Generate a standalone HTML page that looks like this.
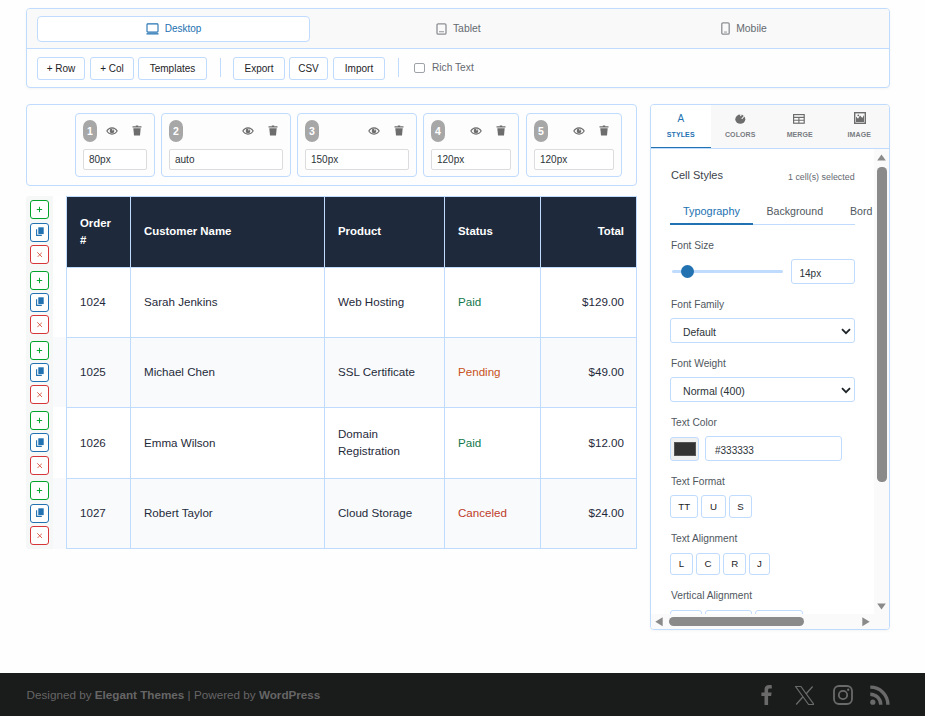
<!DOCTYPE html>
<html><head><meta charset="utf-8">
<style>
*{box-sizing:border-box;margin:0;padding:0}
html,body{width:925px;height:717px;overflow:hidden}
body{position:relative;background:#fefefe;font-family:"Liberation Sans",sans-serif;color:#1d2327}
.abs{position:absolute}
.nw{white-space:nowrap}
#tb{left:26px;top:8px;width:864px;height:80px;border:1px solid #bfdbfe;border-radius:4px;background:#fefefe;overflow:hidden;box-shadow:0 1px 3px rgba(0,0,0,.045)}
#tb .top{position:absolute;left:0;top:0;width:862px;height:40px;background:#f9f9f9;border-bottom:1px solid #bfdbfe}
.dev{position:absolute;top:7px;height:26px;width:273px;padding-bottom:1px;font-size:10px;color:#646970;display:flex;align-items:center;justify-content:center}
.dev.act{background:#fff;border:1px solid #bfdbfe;border-radius:4px;color:#2271b1}
.dev svg{margin-right:6px;display:block}
.btn{position:absolute;top:48px;height:23px;padding-bottom:1px;border:1px solid #bfdbfe;border-radius:3px;background:#fff;font-size:10px;color:#1d2327;display:flex;align-items:center;justify-content:center}
.sep{position:absolute;top:49px;width:1px;height:19px;background:#bfdbfe}
#cp{left:26px;top:104px;width:611px;height:82px;border:1px solid #bfdbfe;border-radius:4px;background:#fefefe}
.cc{position:absolute;top:8px;height:64px;border:1px solid #bfdbfe;border-radius:4px;background:#fdfdfd}
.badge{position:absolute;left:7px;top:6px;width:14px;height:22px;border-radius:7px;background:#a7a7a7;color:#fff;font-size:10.5px;font-weight:bold;display:flex;align-items:center;justify-content:center}
.cin{position:absolute;left:7px;top:35px;height:21px;border:1px solid #dcdcde;border-radius:2px;background:#fff;font-size:10px;color:#2c3338;padding-left:5px;display:flex;align-items:center}
.eye{position:absolute;top:12.5px;line-height:0}
.trash{position:absolute;top:11px;line-height:0}
.th{position:absolute;display:flex;align-items:center;padding-left:13px;padding-bottom:1px;color:#fff;font-weight:bold;font-size:11.4px;line-height:17px}
.td{position:absolute;display:flex;align-items:center;padding-left:13px;padding-bottom:1.5px;color:#1f2a3a;font-size:11.6px;line-height:17.5px}
.th.r,.td.r{justify-content:flex-end;padding-left:0;padding-right:12px}
.rb{position:absolute;left:30px;width:19px;height:19px;border:1px solid;border-radius:3px;background:#fff;display:flex;align-items:center;justify-content:center}
.rb svg{display:block}
#rp{left:650px;top:104px;width:240px;height:526px;border:1px solid #bfdbfe;border-radius:4px;background:#fff;overflow:hidden;box-shadow:0 1px 3px rgba(0,0,0,.045)}
.tab{position:absolute;top:0;height:44px;width:59.5px;background:#f8f8f8;border-bottom:1px solid #bfdbfe;text-align:center;color:#787c82}
.tab.act{background:#fff;color:#2271b1}
.tab .lbl{position:absolute;left:0;right:0;top:25.8px;font-size:7px;line-height:8px;font-weight:bold;letter-spacing:0.1px}
.inp{position:absolute;border:1px solid #bfdbfe;border-radius:3px;background:#fff;font-size:10px;color:#2c3338;display:flex;align-items:center}
.fb{position:absolute;height:22.3px;border:1px solid #bfdbfe;border-radius:3px;background:#fff;font-size:9.7px;color:#1d2327;display:flex;align-items:center;justify-content:center}
#ft{left:0;top:673px;width:925px;height:43px;background:#1a1b1b;color:#666}
</style></head><body>
<div id="tb" class="abs"><div class="top">
<div class="dev act" style="left:10px"><svg width="13" height="12" viewBox="0 0 13 12"><rect x="1" y="0.9" width="11" height="8.2" rx="0.8" fill="none" stroke="#2271b1" stroke-width="1.1"/><rect x="0.5" y="10" width="12" height="1.6" fill="#2271b1" opacity=".8"/></svg><span>Desktop</span></div>
<div class="dev" style="left:294.8px;font-size:10.4px"><svg width="11" height="12" viewBox="0 0 11 12"><rect x="1" y="0.8" width="9" height="10.4" rx="1.2" fill="none" stroke="#8c8f94" stroke-width="1.3"/><rect x="3" y="8.3" width="5" height="0.9" fill="#8c8f94"/></svg><span>Tablet</span></div>
<div class="dev" style="left:580.5px;font-size:10.4px"><svg width="9" height="13" viewBox="0 0 9 13"><rect x="0.8" y="0.8" width="7.4" height="11.4" rx="1.2" fill="none" stroke="#8c8f94" stroke-width="1.3"/><rect x="3" y="9.6" width="3" height="0.9" fill="#8c8f94"/></svg><span>Mobile</span></div>
</div>
<div class="btn" style="left:10px;width:48px">+ Row</div>
<div class="btn" style="left:63px;width:44px">+ Col</div>
<div class="btn" style="left:111px;width:69px">Templates</div>
<div class="btn" style="left:206px;width:52px">Export</div>
<div class="btn" style="left:262px;width:39px">CSV</div>
<div class="btn" style="left:306px;width:52px">Import</div>
<div class="sep" style="left:193px"></div><div class="sep" style="left:371px"></div>
<div class="abs" style="left:387px;top:53.5px;width:10.5px;height:10.5px;border:1px solid #9ea3a8;border-radius:2px;background:#fff"></div>
<div class="abs nw" style="left:405px;top:53px;font-size:10.2px;color:#646970">Rich Text</div>
</div>
<div id="cp" class="abs">
<div class="cc" style="left:48px;width:80px"><div class="badge">1</div><div class="eye" style="left:30.2px"><svg width="12" height="8" viewBox="0 0 12 8"><path d="M6 0.3C3.2 0.3 1.1 2.2 0.2 4c0.9 1.8 3 3.7 5.8 3.7S10.9 5.8 11.8 4C10.9 2.2 8.8 0.3 6 0.3z" fill="#6d6d6d"/><path d="M6 1.4C4 1.4 2.3 2.7 1.5 4 2.3 5.3 4 6.6 6 6.6S9.7 5.3 10.5 4C9.7 2.7 8 1.4 6 1.4z" fill="#fdfdfd"/><circle cx="6" cy="3.9" r="2.3" fill="#6d6d6d"/><circle cx="6.9" cy="2.8" r="0.8" fill="#fdfdfd"/></svg></div><div class="trash" style="left:55.5px"><svg width="10" height="11" viewBox="0 0 10 11"><path d="M3.8 1.2V0.6h2.4v0.6H9.5v1.4H0.5V1.2z" fill="#6d6d6d"/><path d="M1.3 3.2h7.4L8 10.6H2z" fill="#6d6d6d"/></svg></div><div class="cin" style="width:64px">80px</div></div>
<div class="cc" style="left:134px;width:130px"><div class="badge">2</div><div class="eye" style="left:80.2px"><svg width="12" height="8" viewBox="0 0 12 8"><path d="M6 0.3C3.2 0.3 1.1 2.2 0.2 4c0.9 1.8 3 3.7 5.8 3.7S10.9 5.8 11.8 4C10.9 2.2 8.8 0.3 6 0.3z" fill="#6d6d6d"/><path d="M6 1.4C4 1.4 2.3 2.7 1.5 4 2.3 5.3 4 6.6 6 6.6S9.7 5.3 10.5 4C9.7 2.7 8 1.4 6 1.4z" fill="#fdfdfd"/><circle cx="6" cy="3.9" r="2.3" fill="#6d6d6d"/><circle cx="6.9" cy="2.8" r="0.8" fill="#fdfdfd"/></svg></div><div class="trash" style="left:105.5px"><svg width="10" height="11" viewBox="0 0 10 11"><path d="M3.8 1.2V0.6h2.4v0.6H9.5v1.4H0.5V1.2z" fill="#6d6d6d"/><path d="M1.3 3.2h7.4L8 10.6H2z" fill="#6d6d6d"/></svg></div><div class="cin" style="width:114px">auto</div></div>
<div class="cc" style="left:270px;width:120px"><div class="badge">3</div><div class="eye" style="left:70.2px"><svg width="12" height="8" viewBox="0 0 12 8"><path d="M6 0.3C3.2 0.3 1.1 2.2 0.2 4c0.9 1.8 3 3.7 5.8 3.7S10.9 5.8 11.8 4C10.9 2.2 8.8 0.3 6 0.3z" fill="#6d6d6d"/><path d="M6 1.4C4 1.4 2.3 2.7 1.5 4 2.3 5.3 4 6.6 6 6.6S9.7 5.3 10.5 4C9.7 2.7 8 1.4 6 1.4z" fill="#fdfdfd"/><circle cx="6" cy="3.9" r="2.3" fill="#6d6d6d"/><circle cx="6.9" cy="2.8" r="0.8" fill="#fdfdfd"/></svg></div><div class="trash" style="left:95.5px"><svg width="10" height="11" viewBox="0 0 10 11"><path d="M3.8 1.2V0.6h2.4v0.6H9.5v1.4H0.5V1.2z" fill="#6d6d6d"/><path d="M1.3 3.2h7.4L8 10.6H2z" fill="#6d6d6d"/></svg></div><div class="cin" style="width:104px">150px</div></div>
<div class="cc" style="left:396px;width:96px"><div class="badge">4</div><div class="eye" style="left:46.2px"><svg width="12" height="8" viewBox="0 0 12 8"><path d="M6 0.3C3.2 0.3 1.1 2.2 0.2 4c0.9 1.8 3 3.7 5.8 3.7S10.9 5.8 11.8 4C10.9 2.2 8.8 0.3 6 0.3z" fill="#6d6d6d"/><path d="M6 1.4C4 1.4 2.3 2.7 1.5 4 2.3 5.3 4 6.6 6 6.6S9.7 5.3 10.5 4C9.7 2.7 8 1.4 6 1.4z" fill="#fdfdfd"/><circle cx="6" cy="3.9" r="2.3" fill="#6d6d6d"/><circle cx="6.9" cy="2.8" r="0.8" fill="#fdfdfd"/></svg></div><div class="trash" style="left:71.5px"><svg width="10" height="11" viewBox="0 0 10 11"><path d="M3.8 1.2V0.6h2.4v0.6H9.5v1.4H0.5V1.2z" fill="#6d6d6d"/><path d="M1.3 3.2h7.4L8 10.6H2z" fill="#6d6d6d"/></svg></div><div class="cin" style="width:80px">120px</div></div>
<div class="cc" style="left:499px;width:96px"><div class="badge">5</div><div class="eye" style="left:46.2px"><svg width="12" height="8" viewBox="0 0 12 8"><path d="M6 0.3C3.2 0.3 1.1 2.2 0.2 4c0.9 1.8 3 3.7 5.8 3.7S10.9 5.8 11.8 4C10.9 2.2 8.8 0.3 6 0.3z" fill="#6d6d6d"/><path d="M6 1.4C4 1.4 2.3 2.7 1.5 4 2.3 5.3 4 6.6 6 6.6S9.7 5.3 10.5 4C9.7 2.7 8 1.4 6 1.4z" fill="#fdfdfd"/><circle cx="6" cy="3.9" r="2.3" fill="#6d6d6d"/><circle cx="6.9" cy="2.8" r="0.8" fill="#fdfdfd"/></svg></div><div class="trash" style="left:71.5px"><svg width="10" height="11" viewBox="0 0 10 11"><path d="M3.8 1.2V0.6h2.4v0.6H9.5v1.4H0.5V1.2z" fill="#6d6d6d"/><path d="M1.3 3.2h7.4L8 10.6H2z" fill="#6d6d6d"/></svg></div><div class="cin" style="width:80px">120px</div></div>
</div>
<div class="abs" style="left:26px;top:196px;width:27px;height:353px;background:#f6f7f7;border-radius:3px 0 0 3px"></div>
<div class="abs" style="left:53px;top:196px;width:13px;height:72px;background:#ffffff"></div>
<div class="abs" style="left:66px;top:196px;width:571px;height:72px;background:#1e293b"></div>
<div class="abs" style="left:53px;top:267px;width:13px;height:71px;background:#ffffff"></div>
<div class="abs" style="left:66px;top:267px;width:571px;height:71px;background:#ffffff"></div>
<div class="abs" style="left:53px;top:337px;width:13px;height:71px;background:#f8fafc"></div>
<div class="abs" style="left:66px;top:337px;width:571px;height:71px;background:#f8fafc"></div>
<div class="abs" style="left:53px;top:407px;width:13px;height:72px;background:#ffffff"></div>
<div class="abs" style="left:66px;top:407px;width:571px;height:72px;background:#ffffff"></div>
<div class="abs" style="left:53px;top:478px;width:13px;height:71px;background:#f8fafc"></div>
<div class="abs" style="left:66px;top:478px;width:571px;height:71px;background:#f8fafc"></div>
<div class="abs" style="left:66px;top:196px;width:571px;height:1px;background:#bfdbfe"></div>
<div class="abs" style="left:66px;top:267px;width:571px;height:1px;background:#bfdbfe"></div>
<div class="abs" style="left:66px;top:337px;width:571px;height:1px;background:#bfdbfe"></div>
<div class="abs" style="left:66px;top:407px;width:571px;height:1px;background:#bfdbfe"></div>
<div class="abs" style="left:66px;top:478px;width:571px;height:1px;background:#bfdbfe"></div>
<div class="abs" style="left:66px;top:548px;width:571px;height:1px;background:#bfdbfe"></div>
<div class="abs" style="left:66px;top:196px;width:1px;height:353px;background:#bfdbfe"></div>
<div class="abs" style="left:130px;top:196px;width:1px;height:353px;background:#bfdbfe"></div>
<div class="abs" style="left:324px;top:196px;width:1px;height:353px;background:#bfdbfe"></div>
<div class="abs" style="left:444px;top:196px;width:1px;height:353px;background:#bfdbfe"></div>
<div class="abs" style="left:540px;top:196px;width:1px;height:353px;background:#bfdbfe"></div>
<div class="abs" style="left:636px;top:196px;width:1px;height:353px;background:#bfdbfe"></div>
<div class="th" style="left:67px;top:197px;width:63px;height:70px;">Order<br>#</div>
<div class="th" style="left:131px;top:197px;width:193px;height:70px;">Customer Name</div>
<div class="th" style="left:325px;top:197px;width:119px;height:70px;">Product</div>
<div class="th" style="left:445px;top:197px;width:95px;height:70px;">Status</div>
<div class="th r" style="left:541px;top:197px;width:95px;height:70px;">Total</div>
<div class="td" style="left:67px;top:268px;width:63px;height:69px;">1024</div>
<div class="td" style="left:131px;top:268px;width:193px;height:69px;">Sarah Jenkins</div>
<div class="td" style="left:325px;top:268px;width:119px;height:69px;">Web Hosting</div>
<div class="td" style="left:445px;top:268px;width:95px;height:69px;color:#12784c;">Paid</div>
<div class="td r" style="left:541px;top:268px;width:95px;height:69px;">$129.00</div>
<div class="td" style="left:67px;top:338px;width:63px;height:69px;">1025</div>
<div class="td" style="left:131px;top:338px;width:193px;height:69px;">Michael Chen</div>
<div class="td" style="left:325px;top:338px;width:119px;height:69px;">SSL Certificate</div>
<div class="td" style="left:445px;top:338px;width:95px;height:69px;color:#c9511a;">Pending</div>
<div class="td r" style="left:541px;top:338px;width:95px;height:69px;">$49.00</div>
<div class="td" style="left:67px;top:408px;width:63px;height:70px;">1026</div>
<div class="td" style="left:131px;top:408px;width:193px;height:70px;">Emma Wilson</div>
<div class="td" style="left:325px;top:408px;width:119px;height:70px;">Domain<br>Registration</div>
<div class="td" style="left:445px;top:408px;width:95px;height:70px;color:#12784c;">Paid</div>
<div class="td r" style="left:541px;top:408px;width:95px;height:70px;">$12.00</div>
<div class="td" style="left:67px;top:479px;width:63px;height:69px;">1027</div>
<div class="td" style="left:131px;top:479px;width:193px;height:69px;">Robert Taylor</div>
<div class="td" style="left:325px;top:479px;width:119px;height:69px;">Cloud Storage</div>
<div class="td" style="left:445px;top:479px;width:95px;height:69px;color:#c03a28;">Canceled</div>
<div class="td r" style="left:541px;top:479px;width:95px;height:69px;">$24.00</div>
<div class="rb" style="top:200.05px;border-color:#00a32a"><svg width="7" height="7" viewBox="0 0 7 7"><path d="M3.5 0.8v5.4M0.8 3.5h5.4" stroke="#00a32a" stroke-width="0.95"/></svg></div>
<div class="rb" style="top:222.50px;border-color:#2271b1"><svg width="8" height="9" viewBox="0 0 8 9" style="margin-top:-1.5px"><path d="M0.6 2.2v6.2h5.2" fill="none" stroke="#2271b1" stroke-width="1.1"/><rect x="2.3" y="0.3" width="5.4" height="6.8" fill="#2271b1"/></svg></div>
<div class="rb" style="top:244.95px;border-color:#d63638"><svg width="5.5" height="5.5" viewBox="0 0 6 6"><path d="M0.3 0.3l5.4 5.4M5.7 0.3l-5.4 5.4" stroke="#d4503a" stroke-width="0.95"/></svg></div>
<div class="rb" style="top:270.50px;border-color:#00a32a"><svg width="7" height="7" viewBox="0 0 7 7"><path d="M3.5 0.8v5.4M0.8 3.5h5.4" stroke="#00a32a" stroke-width="0.95"/></svg></div>
<div class="rb" style="top:292.95px;border-color:#2271b1"><svg width="8" height="9" viewBox="0 0 8 9" style="margin-top:-1.5px"><path d="M0.6 2.2v6.2h5.2" fill="none" stroke="#2271b1" stroke-width="1.1"/><rect x="2.3" y="0.3" width="5.4" height="6.8" fill="#2271b1"/></svg></div>
<div class="rb" style="top:315.40px;border-color:#d63638"><svg width="5.5" height="5.5" viewBox="0 0 6 6"><path d="M0.3 0.3l5.4 5.4M5.7 0.3l-5.4 5.4" stroke="#d4503a" stroke-width="0.95"/></svg></div>
<div class="rb" style="top:340.50px;border-color:#00a32a"><svg width="7" height="7" viewBox="0 0 7 7"><path d="M3.5 0.8v5.4M0.8 3.5h5.4" stroke="#00a32a" stroke-width="0.95"/></svg></div>
<div class="rb" style="top:362.95px;border-color:#2271b1"><svg width="8" height="9" viewBox="0 0 8 9" style="margin-top:-1.5px"><path d="M0.6 2.2v6.2h5.2" fill="none" stroke="#2271b1" stroke-width="1.1"/><rect x="2.3" y="0.3" width="5.4" height="6.8" fill="#2271b1"/></svg></div>
<div class="rb" style="top:385.40px;border-color:#d63638"><svg width="5.5" height="5.5" viewBox="0 0 6 6"><path d="M0.3 0.3l5.4 5.4M5.7 0.3l-5.4 5.4" stroke="#d4503a" stroke-width="0.95"/></svg></div>
<div class="rb" style="top:411.00px;border-color:#00a32a"><svg width="7" height="7" viewBox="0 0 7 7"><path d="M3.5 0.8v5.4M0.8 3.5h5.4" stroke="#00a32a" stroke-width="0.95"/></svg></div>
<div class="rb" style="top:433.45px;border-color:#2271b1"><svg width="8" height="9" viewBox="0 0 8 9" style="margin-top:-1.5px"><path d="M0.6 2.2v6.2h5.2" fill="none" stroke="#2271b1" stroke-width="1.1"/><rect x="2.3" y="0.3" width="5.4" height="6.8" fill="#2271b1"/></svg></div>
<div class="rb" style="top:455.90px;border-color:#d63638"><svg width="5.5" height="5.5" viewBox="0 0 6 6"><path d="M0.3 0.3l5.4 5.4M5.7 0.3l-5.4 5.4" stroke="#d4503a" stroke-width="0.95"/></svg></div>
<div class="rb" style="top:481.30px;border-color:#00a32a"><svg width="7" height="7" viewBox="0 0 7 7"><path d="M3.5 0.8v5.4M0.8 3.5h5.4" stroke="#00a32a" stroke-width="0.95"/></svg></div>
<div class="rb" style="top:503.75px;border-color:#2271b1"><svg width="8" height="9" viewBox="0 0 8 9" style="margin-top:-1.5px"><path d="M0.6 2.2v6.2h5.2" fill="none" stroke="#2271b1" stroke-width="1.1"/><rect x="2.3" y="0.3" width="5.4" height="6.8" fill="#2271b1"/></svg></div>
<div class="rb" style="top:526.20px;border-color:#d63638"><svg width="5.5" height="5.5" viewBox="0 0 6 6"><path d="M0.3 0.3l5.4 5.4M5.7 0.3l-5.4 5.4" stroke="#d4503a" stroke-width="0.95"/></svg></div>
<div id="rp" class="abs">
<div class="tab act" style="left:0.0px"><div style="position:absolute;left:0;right:0;top:9px;font-size:10px;line-height:10px;color:#2271b1">A</div><div class="lbl">STYLES</div></div>
<div class="tab" style="left:59.5px"><svg style="position:absolute;left:24px;top:8.5px" width="11" height="10" viewBox="0 0 11 10"><ellipse cx="5.3" cy="5.2" rx="5" ry="4.6" fill="#6d6d6d"/><path d="M4.6 0.3L5.6 2.4 7.2 0.4z" fill="#f8f8f8"/><path d="M9.2 1.6L6.3 4.6 7.1 5.3 9.7 2.3z" fill="#f8f8f8"/></svg><div class="lbl">COLORS</div></div>
<div class="tab" style="left:119.0px"><svg style="position:absolute;left:23.2px;top:9px" width="12" height="10" viewBox="0 0 12 10"><rect x="0.6" y="0.6" width="10.6" height="8.6" fill="#fff" stroke="#6d6d6d" stroke-width="1.2"/><path d="M0.6 3.4h10.6M0.6 6.2h10.6M5.9 3.4v5.8" stroke="#6d6d6d" stroke-width="1.1"/></svg><div class="lbl">MERGE</div></div>
<div class="tab" style="left:178.5px"><svg style="position:absolute;left:24px;top:7px" width="12" height="12" viewBox="0 0 12 12"><rect x="0.7" y="0.7" width="10.6" height="10.6" fill="none" stroke="#6d6d6d" stroke-width="1.4"/><path d="M2 10V4.5l2 2.2 2-3.2 2.3 2.6L10 3v7z" fill="#6d6d6d"/><circle cx="4.3" cy="3.3" r="0.9" fill="#6d6d6d"/></svg><div class="lbl">IMAGE</div></div>
<div class="abs" style="left:0;top:41.6px;width:60px;height:1.6px;background:#2271b1"></div>
<div style="position:absolute;left:0;top:44px;width:223px;height:465px;overflow:hidden;background:#fff">
<div class="abs nw" style="left:20.00px;top:20.00px;font-size:11px;color:#3c434a">Cell Styles</div>
<div class="abs nw" style="left:137.00px;top:22.80px;font-size:8.9px;color:#646970">1 cell(s) selected</div>
<div class="abs" style="left:19.00px;top:75.00px;width:185px;height:1px;background:#bfdbfe"></div>
<div class="abs" style="left:19.00px;top:73.50px;width:83px;height:2px;background:#2271b1"></div>
<div class="abs nw" style="left:32.00px;top:55.50px;font-size:10.9px;color:#2271b1">Typography</div>
<div class="abs nw" style="left:115.50px;top:55.50px;font-size:10.6px;color:#50575e">Background</div>
<div class="abs nw" style="left:199.00px;top:55.50px;font-size:10.6px;color:#50575e">Bord</div>
<div class="abs nw" style="left:20.00px;top:90.90px;font-size:10.2px;line-height:12px;color:#50575e">Font Size</div>
<div class="abs nw" style="left:20.00px;top:150.20px;font-size:10.2px;line-height:12px;color:#50575e">Font Family</div>
<div class="abs nw" style="left:20.00px;top:209.20px;font-size:10.2px;line-height:12px;color:#50575e">Font Weight</div>
<div class="abs nw" style="left:20.00px;top:267.80px;font-size:10.2px;line-height:12px;color:#50575e">Text Color</div>
<div class="abs nw" style="left:20.00px;top:326.90px;font-size:10.2px;line-height:12px;color:#50575e">Text Format</div>
<div class="abs nw" style="left:20.00px;top:383.60px;font-size:10.2px;line-height:12px;color:#50575e">Text Alignment</div>
<div class="abs nw" style="left:20.00px;top:440.70px;font-size:10.2px;line-height:12px;color:#50575e">Vertical Alignment</div>
<div class="abs" style="left:21.00px;top:120.80px;width:111px;height:3.5px;border-radius:2px;background:#bfdbfe"></div>
<div class="abs" style="left:29.90px;top:115.90px;width:13px;height:13px;border-radius:50%;background:#2271b1"></div>
<div class="inp" style="left:140.00px;top:110.00px;width:64px;height:25px;padding-left:7.5px;padding-top:3px">14px</div>
<div class="inp" style="left:19.00px;top:169.00px;width:185px;height:25px;padding-left:12px;padding-top:3.5px;font-size:10.4px">Default<svg style="position:absolute;right:3px;top:9px" width="10" height="7" viewBox="0 0 10 7"><path d="M1 1.2l4 4 4-4" fill="none" stroke="#1d2327" stroke-width="1.8"/></svg></div>
<div class="inp" style="left:19.00px;top:228.00px;width:185px;height:25px;padding-left:12px;padding-top:3.5px;font-size:10.6px">Normal (400)<svg style="position:absolute;right:3px;top:9px" width="10" height="7" viewBox="0 0 10 7"><path d="M1 1.2l4 4 4-4" fill="none" stroke="#1d2327" stroke-width="1.8"/></svg></div>
<div class="abs" style="left:19.00px;top:288.00px;width:29px;height:24px;border:1px solid #bfdbfe;border-radius:3px;background:#f0f0f1"></div>
<div class="abs" style="left:23.00px;top:293.00px;width:22px;height:14px;background:#333;border:1px solid #555"></div>
<div class="inp" style="left:54.00px;top:287.00px;width:137px;height:25px;padding-left:9px;padding-top:3.5px">#333333</div>
<div class="fb" style="left:19.40px;top:346.30px;width:27.5px">TT</div>
<div class="fb" style="left:50.00px;top:346.30px;width:25.0px">U</div>
<div class="fb" style="left:78.20px;top:346.30px;width:22.8px">S</div>
<div class="fb" style="left:19.30px;top:403.50px;width:22.5px">L</div>
<div class="fb" style="left:45.20px;top:403.50px;width:23.6px">C</div>
<div class="fb" style="left:72.20px;top:403.50px;width:23.0px">R</div>
<div class="fb" style="left:98.20px;top:403.50px;width:20.6px">J</div>
<div class="fb" style="left:19.30px;top:460.50px;width:31.7px"></div>
<div class="fb" style="left:54.00px;top:460.50px;width:47.0px"></div>
<div class="fb" style="left:104.40px;top:460.50px;width:48.1px"></div>
</div>
<div class="abs" style="left:223px;top:44px;width:15px;height:480px;background:#fafafa"></div>
<div class="abs" style="left:0;top:509px;width:223px;height:15px;background:#fafafa"></div>
<svg class="abs" style="left:226px;top:49px" width="9" height="7" viewBox="0 0 9 7"><path d="M4.5 0.5L8.8 6.5H0.2z" fill="#8a8a8a"/></svg>
<div class="abs" style="left:226px;top:62px;width:9.5px;height:315px;border-radius:4.5px;background:#8a8a8a"></div>
<svg class="abs" style="left:226px;top:498px" width="9" height="7" viewBox="0 0 9 7"><path d="M4.5 6.5L8.8 0.5H0.2z" fill="#8a8a8a"/></svg>
<svg class="abs" style="left:4.3px;top:512px" width="8" height="9.5" viewBox="0 0 8 9.5"><path d="M0.3 4.75L7.7 0.2V9.3z" fill="#8a8a8a"/></svg>
<div class="abs" style="left:18px;top:512px;width:135px;height:9px;border-radius:4.5px;background:#8a8a8a"></div>
<svg class="abs" style="left:211px;top:512px" width="8" height="9.5" viewBox="0 0 8 9.5"><path d="M7.7 4.75L0.3 0.2V9.3z" fill="#8a8a8a"/></svg>
</div>
<div id="ft" class="abs">
<div class="abs nw" style="left:26.5px;top:15px;font-size:11.7px;line-height:14px;color:#666">Designed by <b>Elegant Themes</b> | Powered by <b>WordPress</b></div>
<svg class="abs" style="left:761px;top:12px" width="11" height="20" viewBox="0 0 11 20"><path d="M7.1 20V11h3l0.5-3.6H7.1V5.2c0-1 0.3-1.7 1.8-1.7h1.9V0.3C10.5 0.2 9.3 0.1 8 0.1 5.3 0.1 3.5 1.7 3.5 4.7v2.7H0.4V11h3.1v9z" fill="#6a6a6a"/></svg>
<svg class="abs" style="left:794.5px;top:12.5px" width="19" height="19" viewBox="0 0 19 19"><path d="M0.6 0.5h5.3l13 18H13.6z" fill="none" stroke="#6a6a6a" stroke-width="1.2"/><path d="M17.6 0.5L11 8M1.2 18.5L8 10.8" stroke="#6a6a6a" stroke-width="1.3"/></svg>
<svg class="abs" style="left:832.5px;top:12px" width="20" height="20" viewBox="0 0 20 20"><rect x="1" y="1" width="18" height="18" rx="5" fill="none" stroke="#6a6a6a" stroke-width="1.8"/><circle cx="10" cy="10" r="4.2" fill="none" stroke="#6a6a6a" stroke-width="1.8"/><circle cx="15.2" cy="4.8" r="1.2" fill="#6a6a6a"/></svg>
<svg class="abs" style="left:870px;top:12px" width="21" height="20" viewBox="0 0 21 20"><circle cx="2.8" cy="17.2" r="2.6" fill="#6a6a6a"/><path d="M0.3 7.5a12.2 12.2 0 0 1 12.2 12.2h-3.4A8.8 8.8 0 0 0 0.3 10.9z" fill="#6a6a6a"/><path d="M0.3 0.4A19.3 19.3 0 0 1 19.6 19.7h-3.4A15.9 15.9 0 0 0 0.3 3.8z" fill="#6a6a6a"/></svg>
</div>
</body></html>
